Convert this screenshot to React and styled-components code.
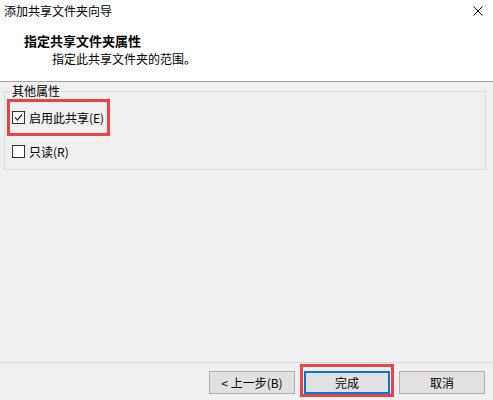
import React from 'react';
import styled, { createGlobalStyle } from 'styled-components';

const GlobalStyle = createGlobalStyle`
	html, body {
		margin: 0;
		padding: 0;
		background: #ffffff;
	}
	body {
		font-family: 'Noto Sans CJK SC', 'Liberation Sans', sans-serif;
		font-size: 12px;
		color: #000000;
	}
`;

const Window = styled.div`
	width: 493px;
	height: 400px;
	display: flex;
	flex-direction: column;
	background: #f0f0f0;
	overflow: hidden;
`;

const TitleBar = styled.div`
	height: 22px;
	display: flex;
	align-items: center;
	justify-content: space-between;
	padding: 0 10px 0 4px;
	background: #ffffff;
	line-height: 16px;
`;

const CloseIcon = styled.svg`
	width: 10px;
	height: 10px;
	margin-top: -1px;
`;

const Header = styled.div`
	height: 48px;
	padding-top: 11px;
	background: #ffffff;
	border-bottom: 1px solid #a0a0a0;
	display: flex;
	flex-direction: column;
`;

const HeaderTitle = styled.div`
	padding-left: 24px;
	font-size: 13px;
	font-weight: 700;
	line-height: 16px;
`;

const HeaderSub = styled.div`
	padding-left: 52px;
	margin-top: 2px;
	line-height: 16px;
`;

const Body = styled.div`
	flex: 1;
	display: flex;
	flex-direction: column;
`;

const GroupBox = styled.fieldset`
	margin: 1px 7px 0 4px;
	padding: 10px 6px 10px 6px;
	border: 1px solid #dcdcdc;
	display: flex;
	flex-direction: column;
	align-items: flex-start;
	gap: 18px;
	min-width: 0;
`;

const Legend = styled.legend`
	padding: 0 1px;
	line-height: 16px;
`;

const CheckRow = styled.label`
	position: relative;
	display: inline-flex;
	align-items: center;
	height: 16px;
	padding-left: 1px;
	padding-right: 3px;

	${(p) =>
		p.$highlight &&
		`
		&::after {
			content: '';
			position: absolute;
			top: -10px;
			bottom: -11px;
			left: -4px;
			right: -3px;
			border: 3px solid #ea4245;
			pointer-events: none;
		}
	`}
`;

const Box = styled.span`
	width: 11px;
	height: 11px;
	border: 1px solid #333333;
	background: #ffffff;
	display: flex;
	align-items: center;
	justify-content: center;
	margin-right: 4px;
`;

const Footer = styled.div`
	margin-top: auto;
	border-top: 1px solid #d6d6d6;
	padding: 8px 8px 6px 0;
	display: flex;
	justify-content: flex-end;
	gap: 9px;
`;

const Button = styled.button`
	position: relative;
	width: 86px;
	height: 23px;
	box-sizing: border-box;
	background: #e1e1e1;
	border: ${(p) => (p.$default ? '2px solid #0078d7' : '1px solid #adadad')};
	font-family: inherit;
	font-size: 12px;
	color: #000000;
	padding: 0;
	line-height: 16px;

	${(p) =>
		p.$highlight &&
		`
		&::after {
			content: '';
			position: absolute;
			top: -9px;
			bottom: -5px;
			left: -6px;
			right: -6px;
			border: 3px solid #ea4245;
			pointer-events: none;
		}
	`}
`;

const Checkbox = ({ checked, label, highlight }) => (
	<CheckRow $highlight={highlight}>
		<Box>
			{checked && (
				<svg width="9" height="9" viewBox="0 0 9 9">
					<path d="M1 4.5 L3.5 7 L8 1.5" fill="none" stroke="#333" strokeWidth="1.3" />
				</svg>
			)}
		</Box>
		{label}
	</CheckRow>
);

const App = () => {
	return (
		<>
			<GlobalStyle />
			<Window>
				<TitleBar>
					<span>添加共享文件夹向导</span>
					<CloseIcon viewBox="0 0 10 10">
						<path d="M0.5 0.5 L9.5 9.5 M9.5 0.5 L0.5 9.5" stroke="#000" strokeWidth="1" />
					</CloseIcon>
				</TitleBar>
				<Header>
					<HeaderTitle>指定共享文件夹属性</HeaderTitle>
					<HeaderSub>指定此共享文件夹的范围。</HeaderSub>
				</Header>
				<Body>
					<GroupBox>
						<Legend>其他属性</Legend>
						<Checkbox checked highlight label="启用此共享(E)" />
						<Checkbox label="只读(R)" />
					</GroupBox>
					<Footer>
						<Button>&lt; 上一步(B)</Button>
						<Button $default $highlight>完成</Button>
						<Button>取消</Button>
					</Footer>
				</Body>
			</Window>
		</>
	);
};

export default App;
